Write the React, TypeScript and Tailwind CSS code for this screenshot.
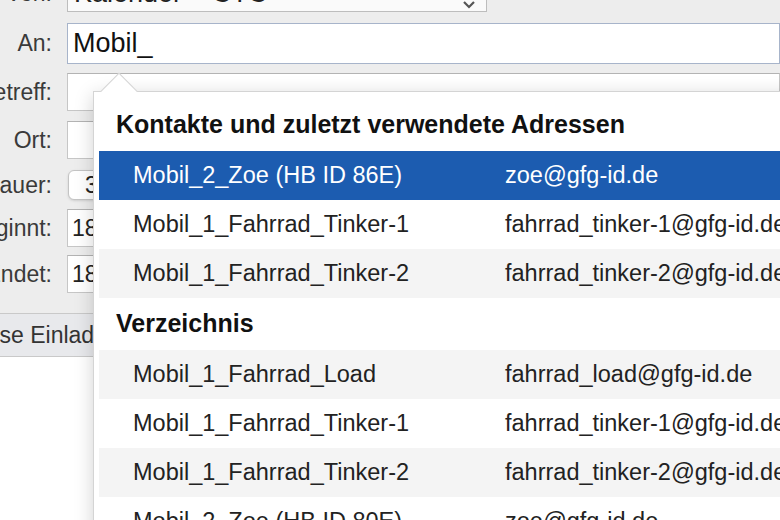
import React from "react"

type Entry = { name: string; email: string }

const recent: Entry[] = [
  { name: "Mobil_2_Zoe (HB ID 86E)", email: "zoe@gfg-id.de" },
  { name: "Mobil_1_Fahrrad_Tinker-1", email: "fahrrad_tinker-1@gfg-id.de" },
  { name: "Mobil_1_Fahrrad_Tinker-2", email: "fahrrad_tinker-2@gfg-id.de" },
]

const directory: Entry[] = [
  { name: "Mobil_1_Fahrrad_Load", email: "fahrrad_load@gfg-id.de" },
  { name: "Mobil_1_Fahrrad_Tinker-1", email: "fahrrad_tinker-1@gfg-id.de" },
  { name: "Mobil_1_Fahrrad_Tinker-2", email: "fahrrad_tinker-2@gfg-id.de" },
  { name: "Mobil_2_Zoe (HB ID 80E)", email: "zoe@gfg-id.de" },
]

function FormRow({ label, className, children }: { label: string; className: string; children: React.ReactNode }) {
  return (
    <div className={`flex items-center gap-[15px] ${className}`}>
      <div className="w-[112px] shrink-0 text-right text-[23px] text-[#3a3a3a] whitespace-nowrap">{label}</div>
      {children}
    </div>
  )
}

function ResultRow({ entry, index, selected }: { entry: Entry; index: number; selected?: boolean }) {
  const bg = selected ? "bg-[#1c5cb0] text-white" : index % 2 === 0 ? "bg-[#f4f4f4] text-[#222]" : "bg-white text-[#222]"
  return (
    <div className={`ml-[5px] h-[49px] flex items-center pl-[34px] text-[23.5px] whitespace-nowrap ${bg}`}>
      <div className="w-[372px] shrink-0">{entry.name}</div>
      <div>{entry.email}</div>
    </div>
  )
}

export default function App() {
  return (
    <div className="relative w-[780px] h-[520px] overflow-hidden bg-[#ededed] flex flex-col font-['Liberation_Sans',Arial,sans-serif] text-[#222]">
      {/* Formular */}
      <div className="-ml-[60px] -mt-[26px] flex flex-col">
        <FormRow label="Von:" className="h-[38px]">
          <div className="w-[420px] h-full bg-[#fafafa] border border-[#bdbdbd] flex items-center justify-between pl-[6px] pr-[10px] text-[27px]">
            <span>Kalender – CTC</span>
            <svg width="14" height="10" viewBox="0 0 14 10" className="mt-[24px]">
              <path d="M2 2 L7 7 L12 2" fill="none" stroke="#555" strokeWidth="2.2" />
            </svg>
          </div>
        </FormRow>
        <FormRow label="An:" className="h-[41px] mt-[11px]">
          <div className="w-[800px] h-full bg-white border border-[#a7b4ca] flex items-center pl-[5px] text-[27px] text-[#111]">
            Mobil_
          </div>
        </FormRow>
        <FormRow label="Betreff:" className="h-[38px] mt-[9px]">
          <div className="w-[800px] h-full bg-white border border-[#c6c6c6] border-t-[#b3b3b3]" />
        </FormRow>
        <FormRow label="Ort:" className="h-[38px] mt-[10px]">
          <div className="w-[800px] h-full bg-white border border-[#c6c6c6] border-t-[#b3b3b3]" />
        </FormRow>
        <FormRow label="Dauer:" className="h-[38px] mt-[7px]">
          <div className="w-[120px] h-[30px] ml-[1px] bg-white border border-[#c4c4c4] rounded-[6px] shadow-sm flex items-center pl-[16px] text-[23px]">
            3
          </div>
        </FormRow>
        <FormRow label="Beginnt:" className="h-[38px] mt-[5px]">
          <div className="w-[120px] h-full bg-white border border-[#c6c6c6] border-t-[#b3b3b3] flex items-center pl-[4px] text-[23px]">
            18:00
          </div>
        </FormRow>
        <FormRow label="Endet:" className="h-[38px] mt-[8px]">
          <div className="w-[120px] h-full bg-white border border-[#c6c6c6] border-t-[#b3b3b3] flex items-center pl-[4px] text-[23px]">
            18:30
          </div>
        </FormRow>
      </div>

      <div className="mt-[20px] h-[44px] bg-[#e8e9ec] border-t border-b border-[#c9c9c9] flex items-center -ml-[35px] text-[23px] text-[#333] whitespace-nowrap">
        Diese Einladung senden
      </div>
      <div className="flex-1 bg-white" />

      {/* Vorschlagsliste */}
      <div className="absolute left-[93px] top-[91px] w-[720px] h-[460px] bg-white border border-[#d4d4d4] shadow-[0_4px_18px_rgba(0,0,0,0.18)]">
        <div className="absolute left-[12px] -top-[14px] w-[26px] h-[26px] rotate-45 bg-white border-l border-t border-[#d4d4d4]" />
        <div className="relative">
          <div className="h-[59px] flex items-center pt-[6px] pl-[22px] text-[25px] font-bold text-[#111]">
            Kontakte und zuletzt verwendete Adressen
          </div>
          {recent.map((e, i) => (
            <ResultRow key={`r-${i}`} entry={e} index={i} selected={i === 0} />
          ))}
          <div className="h-[52px] flex items-center pl-[22px] text-[25px] font-bold text-[#111]">Verzeichnis</div>
          {directory.map((e, i) => (
            <ResultRow key={`d-${i}`} entry={e} index={i} />
          ))}
        </div>
      </div>
    </div>
  )
}
